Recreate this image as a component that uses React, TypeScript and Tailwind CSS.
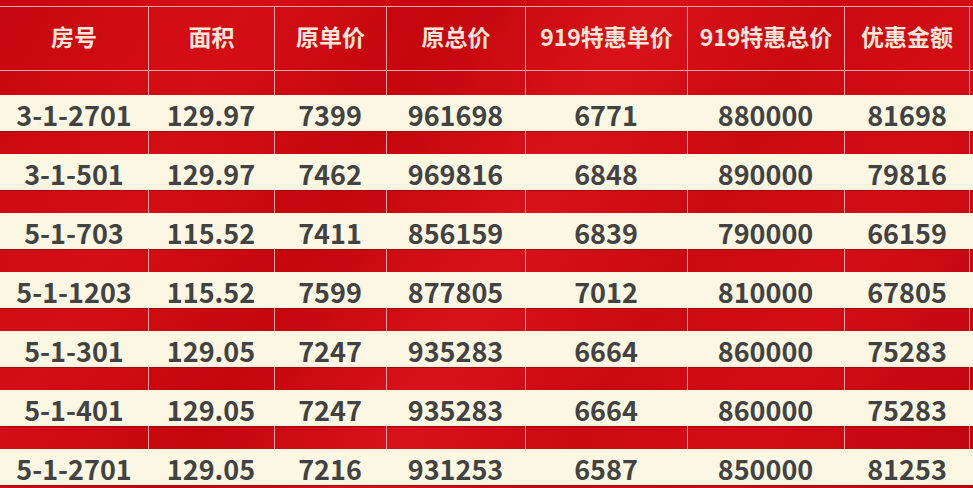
import React from "react";

type Row = {
  room: string;
  area: string;
  unitPrice: string;
  total: string;
  saleUnit: string;
  saleTotal: string;
  discount: string;
};

const headers = ["房号", "面积", "原单价", "原总价", "919特惠单价", "919特惠总价", "优惠金额"];

const rows: Row[] = [
  { room: "3-1-2701", area: "129.97", unitPrice: "7399", total: "961698", saleUnit: "6771", saleTotal: "880000", discount: "81698" },
  { room: "3-1-501", area: "129.97", unitPrice: "7462", total: "969816", saleUnit: "6848", saleTotal: "890000", discount: "79816" },
  { room: "5-1-703", area: "115.52", unitPrice: "7411", total: "856159", saleUnit: "6839", saleTotal: "790000", discount: "66159" },
  { room: "5-1-1203", area: "115.52", unitPrice: "7599", total: "877805", saleUnit: "7012", saleTotal: "810000", discount: "67805" },
  { room: "5-1-301", area: "129.05", unitPrice: "7247", total: "935283", saleUnit: "6664", saleTotal: "860000", discount: "75283" },
  { room: "5-1-401", area: "129.05", unitPrice: "7247", total: "935283", saleUnit: "6664", saleTotal: "860000", discount: "75283" },
  { room: "5-1-2701", area: "129.05", unitPrice: "7216", total: "931253", saleUnit: "6587", saleTotal: "850000", discount: "81253" },
];

const cols = "grid grid-cols-[148px_126px_112px_139px_162px_157px_126px]";

function RedGap({ height }: { height: string }) {
  return (
    <div className={`${cols} ${height}`}>
      {headers.map((h, i) => (
        <div
          key={h}
          className={`${i > 0 ? "border-l border-[#f3a4a0]" : ""} ${i === 6 ? "border-r" : ""}`}
        />
      ))}
    </div>
  );
}

export default function App() {
  return (
    <div className="w-[973px] h-[488px] overflow-hidden font-['Noto_Sans_CJK_SC','Noto_Sans',sans-serif] bg-[#cf0a12] bg-[linear-gradient(120deg,#c7070f_0%,#d40e16_20%,#c4060d_36%,#d8121a_52%,#ca0910_66%,#d20d15_80%,#be050c_100%)]">
      <div className="h-[6px]" />
      <div className={`${cols} h-[65px] border-y border-[#f3a4a0]`}>
        {headers.map((h, i) => (
          <div
            key={h}
            className={`flex items-center justify-center pb-1 text-[23px] font-bold text-[#fbe6d8] ${
              i > 0 ? "border-l border-[#f3a4a0]" : ""
            } ${i === 6 ? "border-r" : ""}`}
          >
            {h}
          </div>
        ))}
      </div>
      <RedGap height="h-[24px]" />
      {rows.map((r, idx) => (
        <React.Fragment key={r.room}>
          <div className={`${cols} h-[36px] bg-[#fcf7e2] shadow-[0_1px_0_#9e0a0a]`}>
            {[r.room, r.area, r.unitPrice, r.total, r.saleUnit, r.saleTotal, r.discount].map((v, i) => (
              <div
                key={i}
                className="flex items-center justify-center pt-[3px] text-[27px] leading-none font-bold text-[#424242]"
              >
                {v}
              </div>
            ))}
          </div>
          {idx < rows.length - 1 && <RedGap height="h-[23px]" />}
        </React.Fragment>
      ))}
    </div>
  );
}
